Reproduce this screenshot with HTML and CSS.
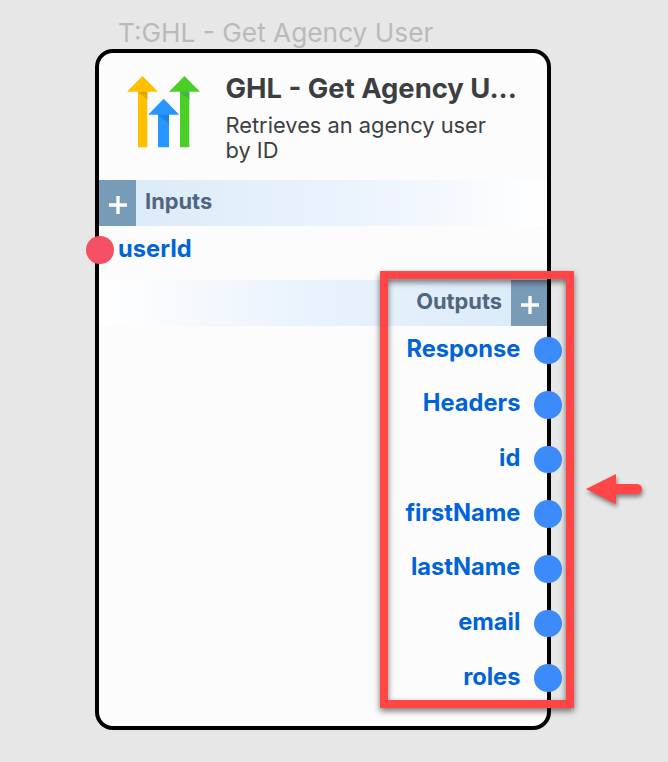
FILE: index.html
```html
<!DOCTYPE html>
<html lang="en">
<head>
<meta charset="utf-8">
<title>GHL - Get Agency User</title>
<link rel="stylesheet" href="styles.css">
</head>
<body>
<main class="canvas">
  <div class="node-label">T:GHL - Get Agency User</div>
  <section class="node">
    <header class="node-header">
      <svg class="logo" width="74" height="74" viewBox="0 0 74 74">
        <path fill="#ffc000" d="M15.500 0 31 15.800H20.300V71.300H11V15.800H0Z"/>
        <path fill="#dda900" d="M11 15.800h9.300v8z"/>
        <path fill="#4bcf26" d="M57.500 0 73 15.800H62.300V71.300H53V15.800H42Z"/>
        <path fill="#48b148" d="M53 15.800h9.300v8z"/>
        <path fill="#2896ff" d="M36.700 22.800 52.200 38.800H42V71.300H31V38.800H21.200Z"/>
        <path fill="#1f83e0" d="M31 38.800h11v9z"/>
      </svg>
      <div class="heading">
        <h1 class="title">GHL - Get Agency U...</h1>
        <p class="description">Retrieves an agency user by ID</p>
      </div>
    </header>
    <div class="band inputs">
      <span class="add"><svg width="18" height="18" viewBox="0 0 18 18"><path d="M9 0v18M0 9h18"/></svg></span>
      <span class="band-label">Inputs</span>
    </div>
    <div class="port input"><span class="dot"></span><span class="port-name">userId</span></div>
    <div class="band outputs">
      <span class="band-label">Outputs</span>
      <span class="add"><svg width="18" height="18" viewBox="0 0 18 18"><path d="M9 0v18M0 9h18"/></svg></span>
    </div>
    <div class="ports">
      <div class="port output"><span class="port-name">Response</span><span class="dot"></span></div>
      <div class="port output"><span class="port-name">Headers</span><span class="dot"></span></div>
      <div class="port output"><span class="port-name">id</span><span class="dot"></span></div>
      <div class="port output"><span class="port-name">firstName</span><span class="dot"></span></div>
      <div class="port output"><span class="port-name">lastName</span><span class="dot"></span></div>
      <div class="port output"><span class="port-name">email</span><span class="dot"></span></div>
      <div class="port output"><span class="port-name">roles</span><span class="dot"></span></div>
    </div>
  </section>
  <div class="callout"></div>
  <svg class="arrow" width="56" height="30" viewBox="0 0 56 30"><path d="M0 15 30 0v10h21a5 5 0 0 1 0 10H30v10z"/></svg>
</main>
</body>
</html>
```
FILE: styles.css
```css
* { box-sizing: border-box; }
body {
  margin: 0;
  background: #e7e7e7;
  font-family: Inter, "Liberation Sans", sans-serif;
}
.canvas {
  position: relative;
  width: 668px;
  height: 762px;
  padding: 17px 117px 0 95px;
  overflow: hidden;
}
.node-label {
  height: 32px;
  padding-left: 23px;
  font-size: 26.250px;
  line-height: 32px;
  color: #bababa;
  white-space: nowrap;
}
.node {
  width: 456px;
  height: 681px;
  border: 4px solid #000;
  border-radius: 18px;
  background: #fcfcfc;
}
.node-header {
  display: flex;
  height: 127px;
  padding: 22px 24px 0 28px;
  gap: 24.500px;
}
.logo { flex: none; margin-top: 1px; }
.heading { flex: 1; min-width: 0; color: #3c3f42; }
.title {
  margin: -4px 0 0;
  font-size: 27.400px;
  font-weight: 700;
  line-height: 34px;
  white-space: nowrap;
}
.description {
  margin: 8px 0 0;
  padding-right: 10px;
  font-size: 21.850px;
  line-height: 25px;
}
.band {
  display: flex;
  height: 46px;
  background: linear-gradient(90deg, #d9eaf7, #ecf4fd 60%, #fff);
}
.outputs {
  justify-content: flex-end;
  background: linear-gradient(270deg, #d9eaf7, #ecf4fd 60%, #fff);
}
.band-label {
  padding: 0 8.500px 0 9.500px;
  font-size: 21.850px;
  font-weight: 700;
  line-height: 42px;
  color: #4f6580;
}
.add {
  display: flex;
  align-items: center;
  justify-content: center;
  width: 36.500px;
  padding: 3px 0 0 2px;
  background: #789bb7;
}
.add svg { fill: none; stroke: #fff; stroke-width: 3.300; }
.port {
  display: flex;
  align-items: center;
  height: 54.650px;
}
.port-name {
  font-size: 23.650px;
  font-weight: 700;
  line-height: 30px;
  color: #0064d8;
  margin-top: -3px;
}
.dot {
  flex: none;
  width: 27.600px;
  height: 27.600px;
  border-radius: 50%;
  background: #3d8bfb;
}
.input { gap: 4.500px; height: 54px; margin-left: -13px; padding-bottom: 6px; }
.input .dot { background: #f55064; }
.ports { margin-top: -3px; }
.output { justify-content: flex-end; gap: 14px; margin-right: -15px; }
.callout {
  position: absolute;
  left: 380px;
  top: 271px;
  width: 194px;
  height: 437px;
  border: 8px solid #ff4545;
  filter: drop-shadow(0 3px 3px rgba(0, 0, 0, .55));
}
.arrow {
  position: absolute;
  left: 586px;
  top: 474px;
  overflow: visible;
  fill: #ff4545;
  filter: drop-shadow(1px 3px 2px rgba(0, 0, 0, .45));
}
```
